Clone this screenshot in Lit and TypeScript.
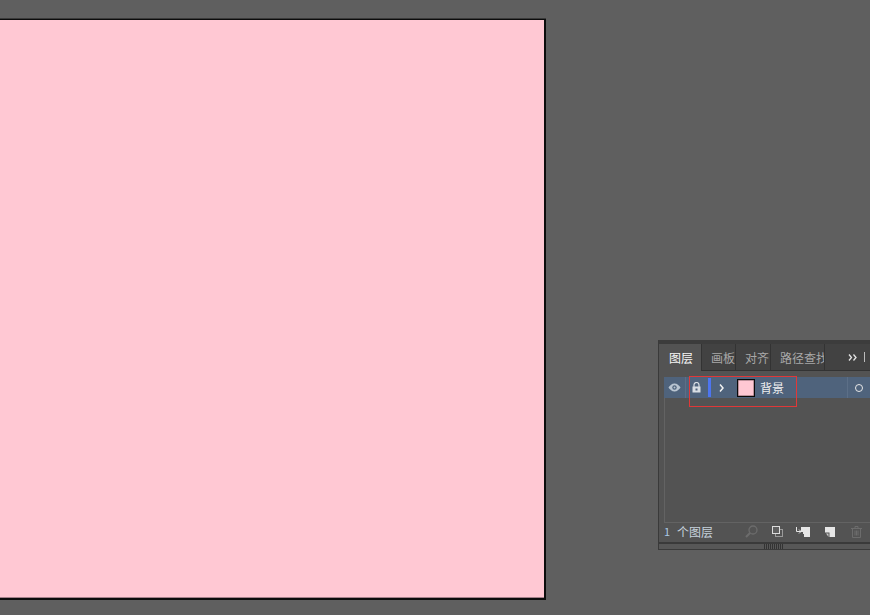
import { LitElement, html, css } from "lit";
import { customElement } from "lit/decorators.js";

@customElement("app-root")
class AppRoot extends LitElement {
  static styles = css`
    :host { display: block; width: 870px; height: 615px; position: relative; overflow: hidden; background: #5f5f5f; font-family: "Noto Sans CJK SC", "Liberation Sans", sans-serif; }
    .artboard { position: absolute; left: 0; top: 19px; width: 544px; height: 578px; background: #ffc8d3; border: solid #0c0c0c; border-width: 1px 2px 2px 0; box-shadow: 0 -1px 0 #3a3a3a, inset 0 -1px 0 #a5808a; }
    .panel { position: absolute; left: 658px; top: 340px; width: 229px; height: 210px; display: flex; flex-direction: column; background: #535353; border-left: 1px solid #3a3a3a; box-sizing: border-box; }
    .tabs { height: 31px; flex: none; display: flex; background: #424242; border-top: 4px solid #3c3c3c; box-sizing: border-box; border-bottom: 1px solid #333; align-items: stretch; }
    .tab { font-size: 12px; line-height: 28px; color: #a8a8a8; padding-left: 9px; overflow: hidden; box-sizing: border-box; border-right: 1px solid #333; white-space: nowrap; }
    .tab.on { color: #f6f6f6; background: #535353; width: 43px; padding-left: 10px; margin-bottom: -1px; }
    .t2 { width: 34px; } .t3 { width: 35px; } .t4 { width: 54px; }
    .more { display: flex; align-items: center; gap: 7px; margin-left: 23px; }
    .more svg { display: block; }
    .sep { width: 1px; height: 10px; background: #bbb; }
    .body { flex: none; width: 207px; height: 146px; margin: 6px 0 0 5px; border: 1px solid #636363; border-width: 0 0 1px 1px; box-sizing: border-box; display: flex; flex-direction: column; }
    .row { height: 21px; background: #4f637c; display: flex; align-items: center; margin-left: -1px; flex: none; }
    .cell { height: 100%; display: flex; align-items: center; justify-content: center; border-right: 1px solid #5c6f87; box-sizing: border-box; }
    .c1 { width: 22px; } .c2 { width: 22px; border-right: 0; padding-right: 1px; }
    .bar { width: 3px; height: 19px; background: #4d75f0; flex: none; }
    .chev { margin-left: 8px; display: block; }
    .thumb { width: 16px; height: 16px; background: #ffc8d3; border: 1px solid #0a0a0a; box-shadow: inset 0 0 0 .5px #7a5a62; margin-left: 13px; flex: none; }
    .name { font-size: 12px; color: #f0f0f0; margin-left: 5px; width: 87px; flex: none; }
    .target { width: 23px; border-left: 1px solid #5c6f87; display: flex; align-items: center; justify-content: center; height: 100%; box-sizing: border-box; }
    .dot { width: 6px; height: 6px; border: 1px solid #e8e8e8; border-radius: 50%; }
    .foot { flex: none; height: 19px; display: flex; align-items: center; padding: 0 0 2px 5px; box-sizing: border-box; color: #c6d2dc; font-size: 12px; }
    .count { width: 81px; display: flex; }
    .num { width: 13px; font-size: 11px; color: #a9c8e4; }
    .icons { display: flex; align-items: center; }
    .icons svg { display: block; flex: none; }
    .ic2 { margin-left: 14px; } .ic3 { margin-left: 13px; } .ic4 { margin-left: 15px; } .ic5 { margin-left: 16px; }
    .grip { flex: none; height: 8px; border-top: 2px solid #3a3a3a; border-bottom: 1px solid #3a3a3a; display: flex; justify-content: center; background: #575757; box-sizing: border-box; }
    .ticks { width: 19px; height: 5px; background: repeating-linear-gradient(90deg, #333 0 1px, transparent 1px 2px); }
    .mark { position: absolute; left: 689px; top: 376px; width: 108px; height: 31px; box-sizing: border-box; border: 1px solid #e03838; pointer-events: none; }
  `;

  render() {
    return html`
      <div class="artboard"></div>
      <div class="panel">
        <div class="tabs">
          <div class="tab on">图层</div>
          <div class="tab t2">画板</div>
          <div class="tab t3">对齐</div>
          <div class="tab t4">路径查找器</div>
          <div class="more">
            <svg width="9" height="7" viewBox="0 0 9 7" fill="none" stroke="#e4e4e4" stroke-width="1.300"><path d="M1 .5l2.500 3L1 6.500M5.500 .5l2.500 3-2.500 3"/></svg>
            <div class="sep"></div>
          </div>
        </div>
        <div class="body">
          <div class="row">
            <div class="cell c1">
              <svg width="13" height="9" viewBox="0 0 13 9"><path d="M0.500 4.500C3 1 5 .5 6.500 .5S10 1 12.500 4.500C10 8 8 8.500 6.500 8.500S3 8 .5 4.500z" fill="#b9c5d1"/><circle cx="6.500" cy="4.500" r="2.200" fill="#4f637c"/><circle cx="6.500" cy="4.500" r="1" fill="#b9c5d1"/></svg>
            </div>
            <div class="cell c2">
              <svg width="9" height="11" viewBox="0 0 9 11"><path d="M2 5V3a2.500 2.500 0 0 1 5 0v2" fill="none" stroke="#d8dee4" stroke-width="1.200"/><rect x="0.500" y="4.500" width="8" height="6" fill="#d8dee4"/><rect x="3.500" y="6.500" width="2" height="2" fill="#4f637c"/></svg>
            </div>
            <div class="bar"></div>
            <svg class="chev" width="5" height="8" viewBox="0 0 5 8" fill="none" stroke="#f2f2f2" stroke-width="1.500"><path d="M1 .5L4 4 1 7.500"/></svg>
            <div class="thumb"></div>
            <div class="name">背景</div>
            <div class="target"><div class="dot"></div></div>
          </div>
        </div>
        <div class="foot">
          <div class="count"><span class="num">1</span><span>个图层</span></div>
          <div class="icons">
            <svg width="13" height="13" viewBox="0 0 13 13" fill="none" stroke="#6c6c6c" stroke-width="1.300"><circle cx="8" cy="5" r="4"/><path d="M5 8L1 12" stroke-width="2"/></svg>
            <svg class="ic2" width="11" height="11" viewBox="0 0 11 11"><rect x="3.500" y="3.500" width="7" height="7" fill="none" stroke="#9a9a9a"/><rect x=".5" y=".5" width="7" height="7" fill="#5f5f5f" stroke="#dcdcdc"/></svg>
            <svg class="ic3" width="14" height="10" viewBox="0 0 14 10"><path d="M5 0h9v10H8V7H7V5H5z" fill="#e6e6e6"/><path d="M.5 0v4.500H5M3 2.500L5 4.500 3 6.500" fill="none" stroke="#e6e6e6"/></svg>
            <svg class="ic4" width="10" height="10" viewBox="0 0 10 10"><path d="M0 0h10v10H4.500V5.500H0z" fill="#e6e6e6"/><path d="M1 6.500h2.500V10z" fill="#c8c8c8"/></svg>
            <svg class="ic5" width="11" height="12" viewBox="0 0 11 12" fill="none" stroke="#6c6c6c"><path d="M0 2.500h11M4 2.500V.5h3v2M1.500 2.500v9h8v-9M4 4.500v5M5.500 4.500v5M7 4.500v5"/></svg>
          </div>
        </div>
        <div class="grip"><div class="ticks"></div></div>
      </div>
      <div class="mark"></div>
    `;
  }
}
